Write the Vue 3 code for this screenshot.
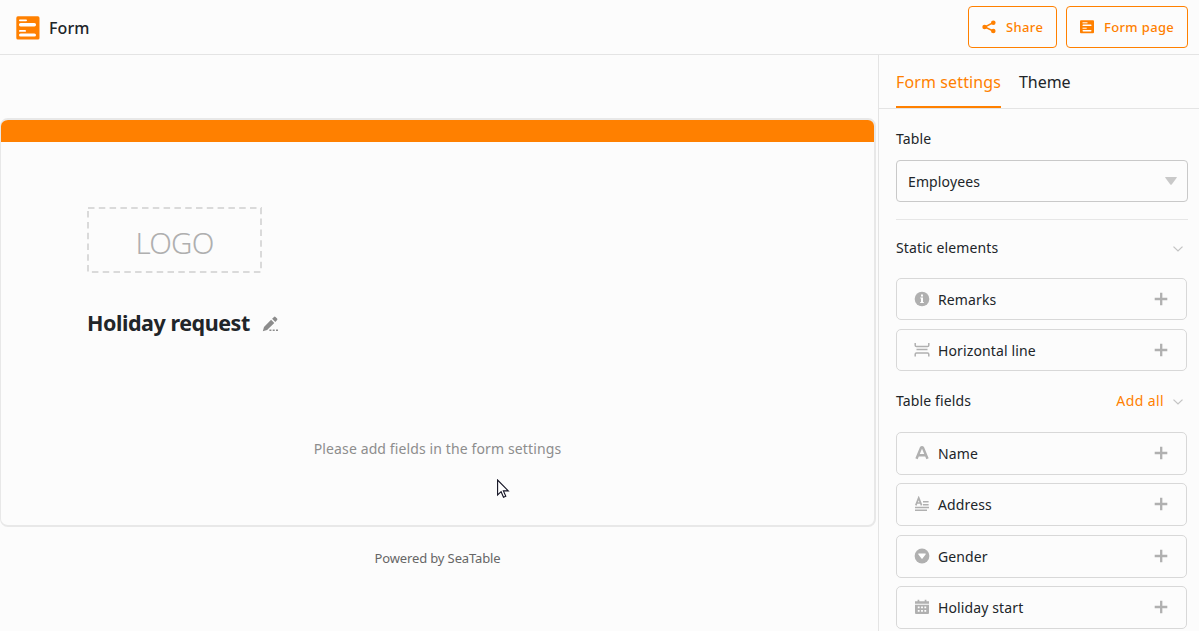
<script setup>
const statics = [
  { label: 'Remarks', icon: 'info' },
  { label: 'Horizontal line', icon: 'line' },
]
const fields = [
  { label: 'Name', icon: 'text' },
  { label: 'Address', icon: 'longtext' },
  { label: 'Gender', icon: 'select' },
  { label: 'Holiday start', icon: 'date' },
]
const groups = [
  { id: 'static', title: 'Static elements', action: '', items: statics },
  { id: 'fields', title: 'Table fields', action: 'Add all', items: fields },
]
</script>

<template>
  <div class="app">
    <header class="topbar">
      <svg class="brand" viewBox="0 0 24 24">
        <rect x="0.3" y="0.3" width="23.2" height="23.2" rx="1.6" fill="#ff8000" />
        <g fill="#fff">
          <rect x="3" y="3.4" width="8" height="1.8" rx=".9" />
          <rect x="3" y="7" width="17" height="3.4" rx="1.6" />
          <rect x="3" y="14" width="7" height="1.8" rx=".9" />
          <rect x="3" y="17.4" width="17" height="3.2" rx="1.6" />
        </g>
      </svg>
      <h1 class="title">Form</h1>
      <button class="btn share">
        <svg width="14" height="14" viewBox="0 0 14 14">
          <path d="M11.2 2.6 2.8 7l8.4 4" fill="none" stroke="#ff8000" stroke-width="1.5" />
          <g fill="#ff8000"><circle cx="11.3" cy="2.8" r="2.3" /><circle cx="2.6" cy="7" r="2.3" /><circle cx="11.3" cy="11" r="2.3" /></g>
        </svg>
        <span>Share</span>
      </button>
      <button class="btn page">
        <svg width="14" height="14" viewBox="0 0 14 14">
          <rect y=".3" width="14" height="13" rx="1" fill="#ff8000" />
          <g fill="#fff">
            <rect x="2.5" y="2.3" width="5" height="1" /><rect x="2.5" y="4.6" width="9" height="1.5" rx=".7" />
            <rect x="2.5" y="7.7" width="4.2" height="1" /><rect x="2.5" y="10" width="9" height="1.5" rx=".7" />
          </g>
        </svg>
        <span>Form page</span>
      </button>
    </header>

    <div class="body">
      <main class="canvas">
        <section class="sheet">
          <div class="band"></div>
          <div class="logo">
            <svg class="dashes" width="175" height="66" viewBox="0 0 175 66">
              <rect x="1" y="1" width="173" height="64" fill="none" stroke="#dadada" stroke-width="2" stroke-dasharray="6.5 4.3" />
            </svg>
            <span>LOGO</span>
          </div>
          <div class="heading">
            <h2>Holiday request</h2>
            <svg width="17" height="16" viewBox="0 0 17 16" fill="#8c8c8c">
              <path d="M0.8 15.2 2 10.9 9.1 3.7l3.2 3.2-7.2 7.1zM10.1 2.7 12 .9q.8-.7 1.5 0l1.6 1.6q.7.8 0 1.5L13.3 5.9z" />
              <path d="M7.4 13.5h2v1.6h-2zM10.7 13.5h2v1.6h-2zM14 13.5h2v1.6h-2z" />
            </svg>
          </div>
          <p class="hint">Please add fields in the form settings</p>
        </section>
        <p class="powered">Powered by SeaTable</p>
        <svg class="cursor" width="13" height="20" viewBox="0 0 13 20">
          <path d="M.6 1v15l3.5-3.3 2.4 5.6 2.3-1-2.4-5.4h4.9z" fill="#fff" stroke="#111122" stroke-width="1.1" />
        </svg>
      </main>

      <aside class="panel">
        <nav class="tabs">
          <a class="tab active"><span>Form settings</span></a>
          <a class="tab theme"><span>Theme</span></a>
        </nav>
        <div class="content">
          <label class="label">Table</label>
          <div class="picker">
            <span>Employees</span>
            <svg width="12" height="8" viewBox="0 0 12 8"><path d="M.7 0h10.6q.9 0 .4.8L6.7 7.4q-.7.8-1.4 0L.3.8Q-.2 0 .7 0z" fill="#c9c9c9" /></svg>
          </div>
          <section v-for="g in groups" :key="g.id" :class="['group', g.id]">
            <div class="group-head">
              <span class="group-title">{{ g.title }}</span>
              <span v-if="g.action" class="action">{{ g.action }}</span>
              <svg class="chev" width="10" height="6" viewBox="0 0 10 6"><path d="M.5.6 5 4.9 9.5.6" fill="none" stroke="#c4c4c4" stroke-width="1.3" /></svg>
            </div>
            <div class="items">
              <div v-for="i in g.items" :key="i.label" class="item">
                <svg class="icon" width="16" height="16" viewBox="0 0 16 16" fill="#b0b0b0">
                  <template v-if="i.icon === 'info'">
                    <circle cx="8" cy="8" r="7.3" />
                    <path d="M7 3.5h2v2H7zM6.2 6.6H9v4.4h.8v1H6.2v-1H7V7.6h-.8z" fill="#fff" />
                  </template>
                  <path v-else-if="i.icon === 'line'" d="M1.2 1v2.2q0 1.3 1.3 1.3h11q1.3 0 1.3-1.3V1M2.5 7.5h11M1.2 14.5v-2.2q0-1.3 1.3-1.3h11q1.3 0 1.3 1.3v2.2" fill="none" stroke="#b0b0b0" stroke-width="1.5" />
                  <path v-else-if="i.icon === 'text'" d="M2.5 13.7 7 2.8q1-1.3 2 0l4.5 10.9M4.3 10.2h7.4" fill="none" stroke="#b0b0b0" stroke-width="2.5" />
                  <template v-else-if="i.icon === 'longtext'">
                    <path d="M1.8 9.4 4.7 1.9l2.9 7.5M3 7h3.5" fill="none" stroke="#b0b0b0" stroke-width="1.7" />
                    <path d="M9 5h5.6v1.5H9zM9 8h5.6v1.5H9zM1 10.7h14v1.6H1zM1 13.6h12v1.5H1z" />
                  </template>
                  <template v-else-if="i.icon === 'select'">
                    <circle cx="8" cy="8" r="7.4" />
                    <path d="M4.7 5.6h6.6q.9 0 .3.9L8.5 10.6q-.5.6-1 0L4.4 6.5q-.6-.9.3-.9z" fill="#fff" />
                  </template>
                  <template v-else>
                    <path d="M1 2.2h2.6V.8h1.7v1.4h5.4V.8h1.7v1.4H15v2.6H1zM1 5.7h14v8.4q0 1-1 1H2q-1 0-1-1z" />
                    <path d="M3.8 7.5h1.8v1.8H3.8zM7.1 7.5h1.8v1.8H7.1zM10.4 7.5h1.8v1.8h-1.8zM3.8 11h1.8v1.8H3.8zM7.1 11h1.8v1.8H7.1zM10.4 11h1.8v1.8h-1.8z" fill="#fff" />
                  </template>
                </svg>
                <span class="name">{{ i.label }}</span>
                <svg width="14" height="14" viewBox="0 0 14 14"><path d="M7.2 .7v12.6M.7 7h12.6" stroke="#b0b0b0" stroke-width="2.3" /></svg>
              </div>
            </div>
          </section>
        </div>
      </aside>
    </div>
  </div>
</template>

<style>
body { margin: 0; overflow: hidden; }
</style>

<style scoped>
* { box-sizing: border-box; }
.app { width: 1199px; height: 631px; overflow: hidden; display: flex; flex-direction: column; background: #fcfcfc; color: #212529; font-family: "Noto Sans", "Open Sans", sans-serif; font-size: 14px; letter-spacing: .12px; }
h1, h2, p { margin: 0; }
.topbar { flex: none; height: 55px; border-bottom: 1px solid #e4e4e4; display: flex; align-items: center; padding: 0 11px 0 16px; }
.brand { width: 24px; height: 24px; margin-top: 1px; }
.title { margin: 2px auto 0 9px; font-size: 16px; font-weight: 500; line-height: 24px; }
.btn { height: 42px; border: 1px solid #ff8000; border-radius: 4px; background: transparent; color: #ff8000; display: flex; align-items: center; padding: 0 0 0 13px; font: 500 13px/20px "Noto Sans", sans-serif; letter-spacing: .35px; gap: 10px; white-space: nowrap; }
.share { width: 89px; margin-right: 9px; }
.page { width: 122px; }
.body { flex: 1; min-height: 0; display: flex; }
.canvas { width: 878px; position: relative; display: flex; flex-direction: column; padding-top: 63px; }
.sheet { width: 876px; height: 409px; border: solid #e8e8e8; border-width: 2px 2px 2px 1px; border-radius: 8px; overflow: hidden; }
.band { height: 22px; background: #ff8000; }
.logo { position: relative; width: 175px; height: 66px; margin: 65px 0 0 86px; display: flex; align-items: center; justify-content: center; color: #afafaf; font: 350 29.5px/66px "Noto Sans", sans-serif; letter-spacing: -.8px; padding-top: 6px; }
.dashes { position: absolute; left: 0; top: 0; }
.heading { display: flex; align-items: center; margin: 33px 0 0 86px; height: 34px; gap: 12px; }
.heading h2 { font-size: 21.5px; line-height: 34px; font-weight: 700; letter-spacing: -.45px; white-space: nowrap; }
.heading svg { margin-top: 2px; }
.hint { margin-top: 98px; text-align: center; color: #8d8d8d; line-height: 22px; }
.powered { margin-top: 21px; width: 875px; text-align: center; font-size: 13px; line-height: 20px; letter-spacing: -.13px; color: #666; }
.cursor { position: absolute; left: 497px; top: 424px; }
.panel { width: 321px; border-left: 1px solid #e4e4e4; }
.tabs { height: 54px; border-bottom: 1px solid #e4e4e4; display: flex; padding-left: 17px; gap: 18px; font-size: 16px; line-height: 54px; }
.tab { height: 53px; white-space: nowrap; }
.theme { letter-spacing: -.05px; }
.active { width: 105px; color: #ff8000; border-bottom: 2px solid #ff8000; }
.content { padding: 19px 12px 0 17px; }
.label { display: block; line-height: 22px; }
.picker { margin-top: 10px; width: 292px; height: 42px; border: 1px solid #c9c9c9; border-radius: 4px; display: flex; align-items: center; justify-content: space-between; padding: 0 10px 0 11px; }
.group-head { display: flex; align-items: center; height: 22px; padding-right: 5px; width: 292px; }
.group-title { margin-right: auto; }
.action { color: #ff8000; margin-right: 9px; letter-spacing: .4px; }
.chev { margin-top: 3px; }
.static { margin-top: 17px; padding-top: 16px; border-top: 1px solid #e6e6e6; width: 292px; }
.items { display: flex; flex-direction: column; gap: 9px; margin-top: 20px; }
.fields { margin-top: 18px; }
.item { width: 291px; height: 42px; flex: none; border: 1px solid #d8d8d8; border-radius: 5px; display: flex; align-items: center; padding: 0 18px 0 17px; }
.fields .items { gap: 8px; margin-top: 21px; }
.fields .item { height: 43px; padding-bottom: 1px; }
.fields .item:nth-child(3) { margin-top: 1px; }
.name { margin-left: 8px; margin-right: auto; }
</style>
